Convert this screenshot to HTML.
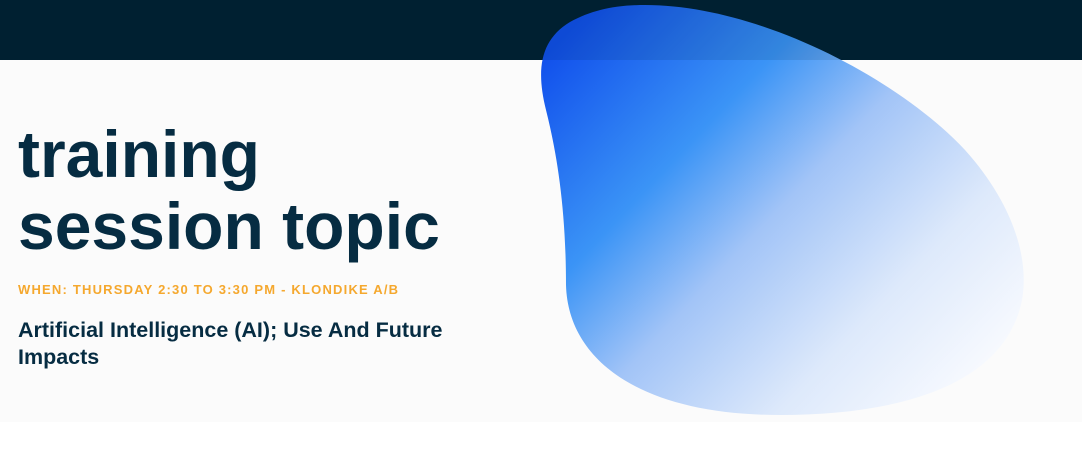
<!DOCTYPE html>
<html><head><style>
html,body{margin:0;padding:0;width:1082px;height:449px;overflow:hidden;background:#fff;font-family:"Liberation Sans",Arial,sans-serif}
.hdr{position:absolute;left:0;top:0;width:1082px;height:60px;background:#012032}
.main{position:absolute;left:0;top:60px;width:1082px;height:362px;background:#fbfbfb}
svg{position:absolute;left:0;top:0}
.t{position:absolute;left:18px;color:#062c42;font-weight:bold}
h1{position:absolute;left:18px;top:118px;margin:0;font-size:66px;line-height:72px;color:#062c42;font-weight:bold;letter-spacing:0px}
.when{top:282px;font-size:13px;color:#f5a82e;letter-spacing:1.2px}
.sub{top:317px;font-size:21.5px;line-height:27px;width:470px}
</style></head><body>
<div class="hdr"></div><div class="main"></div>
<svg width="1082" height="449">
<defs><linearGradient id="g" x1="560" y1="40" x2="960" y2="420" gradientUnits="userSpaceOnUse">
<stop offset="0" stop-color="#1150ec"/><stop offset="0.3" stop-color="#3b94f6"/><stop offset="0.5" stop-color="#a2c4f7"/><stop offset="0.75" stop-color="#dde9fb"/><stop offset="1" stop-color="#fbfcff"/></linearGradient></defs>
<path d="M645 5 C760 5 900 80 965 150 C1010 200 1030 255 1022 300 C1005 385 900 415 780 415 C640 415 568 360 566 285 C566 205 556 150 546 110 C536 70 540 40 570 22 C592 10 615 5 645 5 Z" fill="url(#g)"/>
<path d="M645 5 C760 5 900 80 965 150 L0 150 L0 0 Z" fill="#012032" opacity="0"/>
<rect x="0" y="0" width="1082" height="60" fill="#012032" opacity="0.12"/>
</svg>
<h1>training<br>session topic</h1>
<div class="t when">WHEN: THURSDAY 2:30 TO 3:30 PM - KLONDIKE A/B</div>
<div class="t sub">Artificial Intelligence (AI); Use And Future Impacts</div>
</body></html>
